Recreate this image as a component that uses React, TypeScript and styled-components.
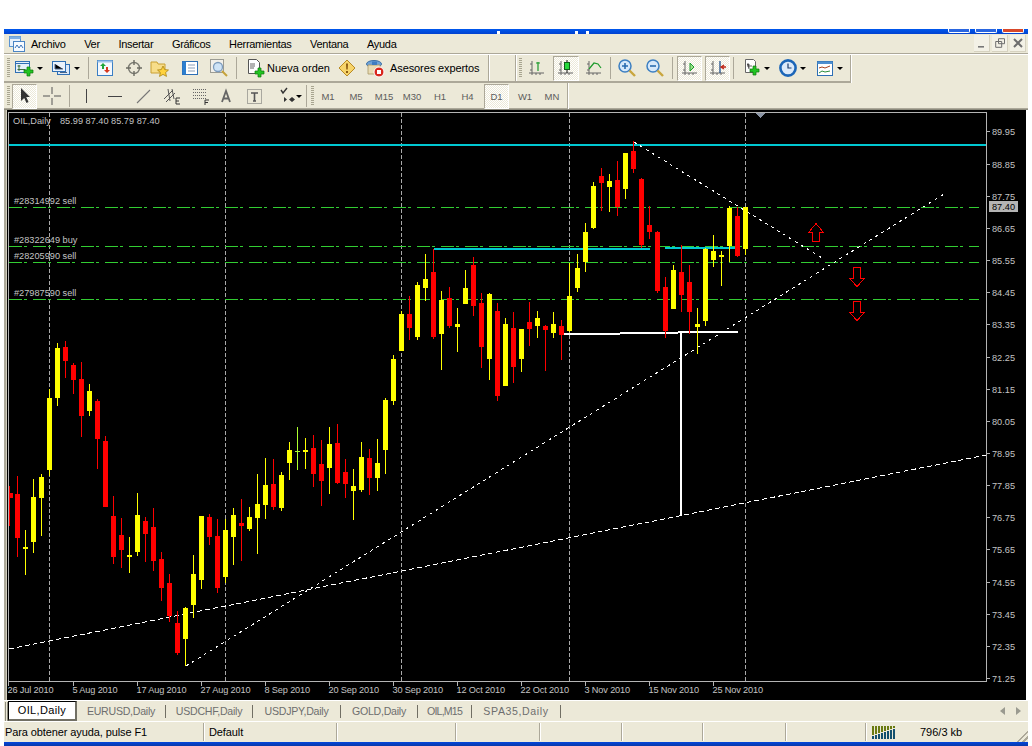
import React from "react";
import styled, { createGlobalStyle } from "styled-components";

const Global = createGlobalStyle`
  html, body { margin: 0; padding: 0; background: #fff; overflow: hidden; }
  #root { height: 746px; }
  * { box-sizing: border-box; }
`;

const Page = styled.div`
  width: 1032px; height: 746px; padding: 29px 4px 0 4px; background: #fff;
  font-family: "Liberation Sans", Arial, sans-serif; font-size: 11px; color: #000;
`;
const Win = styled.div`display: flex; flex-direction: column; height: 717px; background: #ece9d8;`;
const TitleStrip = styled.div`
  position: relative; height: 5px; flex: none;
  background: linear-gradient(#0058ee, #0242cf);
  display: flex; justify-content: flex-end; gap: 5px; padding-right: 4px;
`;
const TitleStub = styled.span<{ $red?: boolean }>`
  width: 22px; height: 4px; border: 1px solid #fff; border-top: 0; border-radius: 0 0 2px 2px;
  background: ${p => (p.$red ? "#d8482a" : "#2a66e0")};
`;
const TitleSpeck = styled.i<{ $x: number }>`
  position: absolute; left: ${p => p.$x}px; top: 2px; width: 3px; height: 3px; background: #fff;
`;
const MenuBar = styled.div`
  height: 21px; flex: none; display: flex; align-items: center; padding-left: 5px;
  border-bottom: 1px solid #fff; box-shadow: inset 0 -1px 0 #aca899;
`;
const MenuList = styled.div`display: flex; gap: 18.6px; margin-left: 6px; flex: 1;`;
const MenuItem = styled.span`font-size: 11px; letter-spacing: -0.3px;`;
const WinBtns = styled.div`display: flex; gap: 2px; padding-right: 2px; padding-bottom: 1px;`;
const WinBtn = styled.span`
  width: 16px; height: 17px; display: flex; align-items: center; justify-content: center;
  background: #f3f1e6; border-right: 1px solid #d6d2c0; border-bottom: 1px solid #d6d2c0;
`;
const Row = styled.div<{ $h: number }>`
  flex: none; display: flex; align-items: stretch; height: ${p => p.$h}px;
`;
const Row2 = styled(Row)`border-bottom: 1px solid #8d8b7d; box-shadow: inset 0 -1px 0 #aca899;`;
const Seg = styled.div<{ $w: number; $under?: boolean }>`
  width: ${p => p.$w}px; flex: none; display: flex; align-items: center;
  border-right: 1px solid #aca899; box-shadow: 1px 0 0 #fff;
  ${p => (p.$under ? "border-bottom: 2px solid #aca899;" : "")}
`;
const Grip = styled.span<{ $ml?: number; $mr?: number }>`
  width: 3px; height: 20px; flex: none; margin: 0 ${p => p.$mr ?? 2}px 0 ${p => p.$ml ?? 3}px;
  background: repeating-linear-gradient(#a8a590 0 1px, transparent 1px 2px);
`;
const Sep = styled.span<{ $ml?: number }>`
  width: 1px; height: 22px; flex: none; background: #aca899; margin: 0 2px 0 ${p => p.$ml ?? 2}px;
`;
const Tool = styled.span<{ $w: number; $pl?: number; $sel?: boolean; $ml?: number; $gap?: number }>`
  flex: none; width: ${p => p.$w}px; height: 25px; display: flex; align-items: center;
  margin-left: ${p => p.$ml ?? 0}px;
  gap: ${p => p.$gap ?? 2}px;
  ${p => (p.$pl !== undefined ? `padding-left: ${p.$pl}px;` : "justify-content: center;")}
  ${p =>
    p.$sel
      ? `border: 1px solid; border-color: #aca899 #fff #fff #aca899;
         background: repeating-conic-gradient(#fff 0 25%, #ece9d8 0 50%) 0 0 / 2px 2px;`
      : ""}
`;
const Caret = styled.i`
  width: 0; height: 0; flex: none; border: 3px solid transparent; border-top: 3px solid #000; border-bottom: 0;
`;
const ToolText = styled.span<{ $ls?: number }>`font-size: 11px; white-space: nowrap; letter-spacing: ${p => p.$ls ?? 0}px;`;
const Period = styled.span`font-size: 9.5px; color: #5c5c5c;`;
const ChartWrap = styled.div`
  flex: none; height: 590px; display: flex; background: #fff;
`;
const ChartEdge = styled.div`
  width: 4px; flex: none;
  background: linear-gradient(90deg, #aca899 0 2px, #d4d0bf 2px 3px, #000 3px);
`;
const ChartSvg = styled.svg`display: block; flex: none; background: #000;`;
const AxisText = styled.text<{ $ls?: number; $dark?: boolean }>`
  font-family: "Liberation Sans", Arial, sans-serif; font-size: 9.2px;
  fill: ${p => (p.$dark ? "#000" : "#c4c4c4")};
  letter-spacing: ${p => p.$ls ?? 0}px;
`;
const TabBar = styled.div`
  flex: none; height: 22px; display: flex; align-items: center; padding-left: 4px;
  border-top: 1px solid #fff; border-bottom: 1px solid #fff;
`;
const TabHandle = styled.span`
  width: 3px; height: 19px; border-left: 1px solid #8d8b7d; border-right: 1px solid #8d8b7d; margin-left: -3px;
`;
const ActiveTab = styled.span`
  width: 69px; height: 20px; margin-top: -1px; background: #fff; display: flex; align-items: center; justify-content: center;
  border: 1px solid #000; border-right: 2px solid #716f64; border-bottom: 2px solid #716f64;
  font-size: 11px; letter-spacing: .35px;
`;
const TabItem = styled.span<{ $w: number; $ls?: number }>`
  width: ${p => p.$w}px; height: 13px; display: flex; align-items: center; justify-content: center; flex: none;
  border-right: 1px solid #716f64; color: #6e6e6e; font-size: 10.6px; letter-spacing: ${p => p.$ls ?? -0.25}px;
`;
const TabArrows = styled.div`margin-left: auto; display: flex; gap: 10px; padding-right: 6px;`;
const StatusBar = styled.div`
  flex: none; height: 20px; display: flex; align-items: stretch; position: relative;
`;
const Cell = styled.span<{ $w: number; $pl?: number }>`
  flex: none; width: ${p => p.$w}px; border-right: 1px solid #aca899; box-shadow: 1px 0 0 #fff;
  padding-left: ${p => p.$pl ?? 0}px; display: flex; align-items: center; font-size: 11px; white-space: nowrap; margin: 1px 0;
  letter-spacing: -0.1px;
`;
const Traffic = styled.span`flex: 1; display: flex; align-items: center; padding-left: 6px; gap: 24px; font-size: 11px;`;
const ResizeGrip = styled.span`
  position: absolute; right: 0; bottom: 0; width: 13px; height: 13px;
  background: repeating-linear-gradient(135deg, transparent 0 2px, #aca899 2px 4px);
  clip-path: polygon(100% 0, 100% 100%, 0 100%);
`;
const BottomStrip = styled.div`flex: none; height: 4px; background: linear-gradient(#0346dc, #0838a8);`;

type Candle = [string, number, number, number, number];
// colour (y=yellow r=red g=lime), wick top, body top, body bottom, wick bottom
const C: Candle[] = [
  ["r",486,493,498,526],["r",476,494,538,557],["y",530,547,549,575],["y",479,497,542,553],["y",474,477,498,536],
  ["y",389,398,470,476],["y",343,348,398,406],["r",341,347,361,378],["r",363,365,380,394],["r",362,379,416,437],
  ["y",384,391,411,416],["r",399,401,439,469],["r",436,441,507,507],["r",496,516,557,564],["r",518,535,550,568],
  ["y",537,555,557,573],["y",493,515,552,556],["r",517,521,534,562],["r",508,527,561,571],["r",552,559,588,601],
  ["r",574,583,616,622],["r",611,623,653,655],["y",607,608,639,666],["y",555,574,605,618],["y",516,516,580,589],
  ["r",514,517,537,545],["r",519,536,588,593],["y",519,530,577,583],["y",508,515,537,565],["r",499,523,526,561],
  ["y",507,517,529,531],["y",474,504,518,554],["y",458,485,505,519],["r",459,484,507,510],["y",472,475,508,511],
  ["y",442,450,463,480],["g",427,451,452,470],["y",438,450,452,469],["r",435,448,474,487],["r",440,464,481,506],
  ["y",427,444,468,494],["r",424,443,483,484],["r",459,472,484,498],["y",469,486,491,520],["y",442,457,490,492],
  ["r",449,458,478,495],["y",439,463,478,491],["y",398,400,450,474],["y",355,359,401,405],["y",311,314,351,351],
  ["r",296,314,328,340],["y",282,285,337,340],["y",254,279,288,301],["r",249,272,337,339],["y",291,300,334,370],
  ["r",287,298,326,328],["y",308,324,327,352],["y",270,288,304,304],["r",257,265,306,316],["r",293,303,347,368],
  ["y",293,294,359,380],["r",303,311,396,401],["y",318,324,386,386],["r",312,328,367,383],["y",329,329,359,372],
  ["r",302,322,329,346],["y",311,318,326,338],["r",325,326,330,371],["y",312,324,333,338],["r",320,326,335,360],
  ["y",263,296,331,332],["y",254,268,288,292],["y",223,232,262,272],["y",182,186,228,229],["r",168,176,183,211],
  ["y",174,181,187,212],["r",161,180,207,216],["y",153,153,189,199],["r",141,151,169,173],["r",178,179,245,248],
  ["r",206,225,232,239],["r",231,232,291,293],["r",277,287,331,338],["y",265,270,309,309],["r",245,272,295,312],
  ["r",265,282,312,334],["y",308,324,327,354],["y",248,249,321,326],["y",235,251,260,267],["y",251,255,257,286],
  ["y",206,208,246,262],["r",207,216,256,257],["y",207,207,249,255],
];
const COL: Record<string, string> = { y: "#ffff00", r: "#ff0000", g: "#adff2f" };
const PRICES: [string, number][] = [
  ["89.95",131],["88.85",164],["87.75",196],["86.65",228],["85.55",260],["84.45",292],["83.35",324],["82.25",357],
  ["81.15",389],["80.05",421],["78.95",453],["77.85",485],["76.75",517],["75.65",549],["74.55",582],["73.45",614],
  ["72.35",646],["71.25",678],
];
const DATES: [string, number][] = [
  ["26 Jul 2010",8],["5 Aug 2010",73],["17 Aug 2010",137],["27 Aug 2010",201],["8 Sep 2010",265],["20 Sep 2010",329],
  ["30 Sep 2010",393],["12 Oct 2010",457],["22 Oct 2010",521],["3 Nov 2010",585],["15 Nov 2010",649],["25 Nov 2010",713],
];
const ORDERS: [string, number, number][] = [
  ["#28314992 sell",207,204],["#28322649 buy",246,243],["#28205990 sell",262,259],["#27987590 sell",299,296],
];

const Chart = () => (
  <ChartSvg width={1018} height={590} viewBox="8 110 1018 590">
    <g shapeRendering="crispEdges">
      <path d="M8.5 112.5H986.5V681.5H8.5Z" fill="none" stroke="#b4b4b4" />
      {[49, 225, 401, 569, 745].map(x => (
        <line key={x} x1={x + 0.5} x2={x + 0.5} y1={113} y2={681} stroke="#a8a8a8" strokeDasharray="4 2" />
      ))}
      <rect x="9" y="144" width="977" height="2" fill="#00c8d2" />
      <rect x="434" y="248" width="216" height="2" fill="#00c8d2" />
      <rect x="665" y="247" width="70" height="2" fill="#00c8d2" />
      {ORDERS.map(([, y]) => (
        <line key={y} x1={9} x2={979} y1={y + 0.5} y2={y + 0.5} stroke="#32cd32" strokeDasharray="13 2 3 6" />
      ))}
      <line x1={634} y1={142} x2={822} y2={258} stroke="#fff" strokeDasharray="3 4" />
      <line x1={186} y1={666} x2={944} y2={194} stroke="#fff" strokeDasharray="3 4" />
      <line x1={9} y1={649} x2={986} y2={455} stroke="#fff" strokeDasharray="5 3" />
      <rect x="564" y="333" width="56" height="2" fill="#fff" />
      <rect x="620" y="332" width="58" height="2" fill="#fff" />
      <rect x="678" y="331" width="60" height="2" fill="#fff" />
      <rect x="680" y="332" width="2" height="184" fill="#fff" />
      {C.map(([k, wt, bt, bb, wb], n) => {
        const c = 9 + 8 * n;
        return (
          <g key={n} fill={COL[k]}>
            <rect x={c} y={wt} width={1} height={wb - wt} />
            <rect x={Math.max(9, c - 2)} y={bt} width={n === 0 ? 4 : 5} height={Math.max(bb - bt, 1)} />
          </g>
        );
      })}
      {PRICES.map(([, y]) => <rect key={y} x="986" y={y} width="4" height="1" fill="#b4b4b4" />)}
      {DATES.map(([, x]) => <rect key={x} x={x} y="681" width="1" height="5" fill="#b4b4b4" />)}
      <path d="M755 113h10l-5 5z" fill="#8a94a4" />
      <g fill="none" stroke="#f00">
        <path d="M812.5 241.5V232.5H808.5L816 223.5L823.5 232.5H819.5V241.5Z" />
        <path d="M853.5 267.5V278.5H849.5L857 286.5L864.5 278.5H860.5V267.5Z" />
        <path d="M853.5 301.5V312.5H849.5L857 320.5L864.5 312.5H860.5V301.5Z" />
      </g>
    </g>
    <AxisText x={13} y={124}>OIL,Daily</AxisText>
    <AxisText x={60} y={124}>85.99 87.40 85.79 87.40</AxisText>
    {ORDERS.map(([t, , y]) => <AxisText key={t} x={14} y={y}>{t}</AxisText>)}
    {PRICES.map(([t, y]) => <AxisText key={t} x={992} y={y + 3.5}>{t}</AxisText>)}
    <rect x="989" y="201" width="29" height="11" fill="#b4b4b4" shapeRendering="crispEdges" />
    <AxisText x={992} y={210} $dark>87.40</AxisText>
    {DATES.map(([t, x]) => <AxisText key={t} x={x - 0.5} y={693} $ls={-0.15}>{t}</AxisText>)}
  </ChartSvg>
);

const Ico = ({ children, s = 20 }: { children: React.ReactNode; s?: number }) => (
  <svg width={s} height={s} viewBox="0 0 20 20" style={{ flex: "none", display: "block" }}>{children}</svg>
);
const Plus = ({ x, y }: { x: number; y: number }) => (
  <path transform={`translate(${x} ${y})`} d="M3 0h3v3h3v3H6v3H3V6H0V3h3z" fill="#22c422" stroke="#0b7a0b" strokeWidth=".7" />
);
const Axes = ({ c = "#666" }: { c?: string }) => (
  <path d="M5 3v14M2 15h15M3 6h2M3 12h2M9 15v2M13 15v2" stroke={c} strokeWidth="1" fill="none" />
);
const IconNew = () => (
  <Ico><rect x="1.5" y="3.5" width="14" height="11" fill="#e4effa" stroke="#2f6fb4" /><path d="M1.5 5.5h14" stroke="#2f6fb4" /><path d="M5 7v6M3.5 11.5h8M3.5 8h3" stroke="#3b6e3b" /><Plus x={10} y={9} /></Ico>
);
const IconProfile = () => (
  <Ico><rect x="6.5" y="6.5" width="12" height="10" fill="#dbe8f7" stroke="#2f6fb4" /><rect x="1.5" y="3.5" width="13" height="10" fill="#eaf2fb" stroke="#2f6fb4" /><path d="M4 6v5h8M9 14.5h7" stroke="#48658a" /></Ico>
);
const IconMarket = () => (
  <Ico><rect x="2.5" y="2.5" width="15" height="15" fill="#f4f8fd" stroke="#3a7fc4" /><path d="M2.5 2.5h15v2h-15z" fill="#9cc3ea" /><path d="M8 5l3 3H9v3H7V8H5z" fill="#1fa53a" /><path d="M12 15l-3-3h2V9h2v3h2z" fill="#d7381e" /></Ico>
);
const IconCross = () => (
  <Ico><circle cx="10" cy="10" r="5.5" fill="none" stroke="#7b7b72" strokeWidth="1.4" /><path d="M10 2v5M10 13v5M2 10h5M13 10h5" stroke="#6b6b62" strokeWidth="1.4" /></Ico>
);
const IconFolder = () => (
  <Ico><path d="M1 4h6l1 2h7v9H1z" fill="#f7dd8a" stroke="#c9a032" /><path d="M13 8l1.7 3.6 3.8.4-2.9 2.6.9 3.8-3.5-2-3.5 2 .9-3.8L7.5 12l3.8-.4z" fill="#ffd23c" stroke="#a98414" strokeWidth=".8" /></Ico>
);
const IconNav = () => (
  <Ico><rect x="2.5" y="3.5" width="15" height="13" fill="#fff" stroke="#2d6fb5" /><rect x="2.5" y="3.5" width="3.5" height="13" fill="#2d7fcf" /><path d="M8 7h7M8 10h7M8 13h7" stroke="#8a9fb8" /></Ico>
);
const IconSearch = () => (
  <Ico><rect x="1.5" y="1.5" width="13" height="13" fill="#f2f0ea" stroke="#9c9c94" /><circle cx="9" cy="9" r="4.5" fill="#cfe4f7" stroke="#7d9cbd" strokeWidth="1.3" /><path d="M13 13l5 5" stroke="#c6a23a" strokeWidth="2" /></Ico>
);
const IconOrder = () => (
  <Ico><path d="M3.5 1.5h8l3 3v11h-11z" fill="#fff" stroke="#555" /><path d="M5 6h5M5 8h5M5 10h4" stroke="#666" /><Plus x={10} y={10} /></Ico>
);
const IconWarn = () => (
  <Ico><path d="M10 2l8 8-8 8-8-8z" fill="#f7d46a" stroke="#b88a24" /><path d="M9 5.5h2l-.3 6h-1.4zM9 13h2v2H9z" fill="#8a5a10" /></Ico>
);
const IconExpert = () => (
  <Ico><ellipse cx="9" cy="6" rx="7.5" ry="3.5" fill="#6ea3d8" stroke="#3a6ea5" /><path d="M3 7h12v9H3z" fill="#e9dcb4" stroke="#a89868" strokeWidth=".8" /><path d="M7 3.5h5V7H7z" fill="#3f7cc0" /><circle cx="14" cy="14" r="5" fill="#d8261c" stroke="#fff" /><rect x="12" y="12" width="4" height="4" fill="#fff" /></Ico>
);
const IconBars = () => (
  <Ico><Axes /><path d="M11 4v9M11 5H9M11 5h2" stroke="#1b9a2a" strokeWidth="1.2" fill="none" /></Ico>
);
const IconCandle = () => (
  <Ico><Axes /><path d="M11 2v13" stroke="#111" /><rect x="8.5" y="4.5" width="5" height="7" fill="#27d83c" stroke="#0d5e18" /></Ico>
);
const IconLine = () => (
  <Ico><Axes /><path d="M5 11l5-6 4 1 3 4" stroke="#1b9a2a" strokeWidth="1.2" fill="none" /></Ico>
);
const IconZoom = ({ minus }: { minus?: boolean }) => (
  <Ico><circle cx="8" cy="8" r="6" fill="#d7e9fa" stroke="#3c7fc2" strokeWidth="1.5" /><path d={minus ? "M5 8h6" : "M5 8h6M8 5v6"} stroke="#2a6cb0" strokeWidth="1.6" /><path d="M12.5 12.5l5.5 5.5" stroke="#c9a63e" strokeWidth="2.4" /></Ico>
);
const IconShift = () => (
  <Ico><Axes /><path d="M10 5v8l4-4z" fill="#9be08a" stroke="#1b9a2a" /></Ico>
);
const IconAuto = () => (
  <Ico><Axes /><path d="M12 3v12" stroke="#1f4f8a" strokeWidth="1.3" /><path d="M18 9h-4M16 7l-3 2 3 2" stroke="#c0281a" strokeWidth="1.3" fill="none" /></Ico>
);
const IconIndicator = () => (
  <Ico><path d="M3.5 1.5h8l2 2v11h-10z" fill="#fff" stroke="#666" /><path d="M5 6h2v5M5 8h5" stroke="#666" /><Plus x={8} y={8} /></Ico>
);
const IconClock = () => (
  <Ico><circle cx="10" cy="10" r="7.6" fill="#dceafa" stroke="#1c66b8" strokeWidth="2.6" /><path d="M10 5.5v4.5h3.5" stroke="#1b3a6b" strokeWidth="1.2" fill="none" /></Ico>
);
const IconTemplate = () => (
  <Ico><rect x="2.5" y="3.5" width="15" height="14" fill="#fff" stroke="#2d6fb5" /><rect x="2.5" y="3.5" width="15" height="2.5" fill="#4d8fd0" /><path d="M4 10l3-1 3 1 5-2" stroke="#a8421e" fill="none" /><path d="M4 15l3-2 3 1 5-1" stroke="#2a8c3a" fill="none" /></Ico>
);
const IconCursor = () => (
  <Ico><path d="M6 2v13l3.2-3 2.3 5 2-1-2.2-5H15z" fill="#333" /></Ico>
);
const IconCrossHair = () => (
  <Ico><path d="M10 1v7M10 12v7M1 10h7M12 10h7" stroke="#555" /></Ico>
);
const IconV = () => <Ico><path d="M10.5 3v14" stroke="#444" /></Ico>;
const IconH = () => <Ico><path d="M3 10.5h14" stroke="#444" /></Ico>;
const IconT = () => <Ico><path d="M4 17L17 4" stroke="#777" strokeWidth="1.1" /></Ico>;
const IconE = () => (
  <Ico><path d="M2 13L11 4M4 16L13 7M6 3l2 12M10 3l2 10" stroke="#555" fill="none" /><path d="M14 12h4M14 12v6h4M14 15h3" stroke="#333" fill="none" /></Ico>
);
const IconF = () => (
  <Ico><path d="M2 3.5h13M2 6.5h13M2 9.5h13M2 12.5h13" stroke="#666" strokeDasharray="1 1" /><path d="M14 14v5M14 14h4M14 16.5h3" stroke="#333" fill="none" /></Ico>
);
const IconA = () => <Ico><path d="M6 16l4-11 4 11M7.5 12.5h5" stroke="#666" strokeWidth="1.8" fill="none" /></Ico>;
const IconTB = () => (
  <Ico><rect x="2.5" y="3.5" width="14" height="14" fill="none" stroke="#666" strokeDasharray="1 1" /><path d="M6 7h7M9.5 7v8M8 15h3" stroke="#555" strokeWidth="1.6" /></Ico>
);
const IconArrows = () => (
  <Ico><path d="M5 4l2 3 4-5" stroke="#333" strokeWidth="1.4" fill="none" /><path d="M8 11l3 2.5-3 2.5zM13 13.5l3-2.5 3 2.5-3 2.5z" fill="#333" /></Ico>
);
const IconApp = () => (
  <svg width="16" height="16" viewBox="0 0 16 16" style={{ display: "block" }}>
    <rect x=".5" y=".5" width="11" height="10" fill="#e8f1fb" stroke="#5a94d2" /><rect x=".5" y=".5" width="11" height="2.5" fill="#80b0e4" />
    <rect x="4.5" y="5.5" width="11" height="10" fill="#f6faff" stroke="#4a84c4" /><path d="M6 12l2-3 2 3 2-3 2 3" stroke="#3b74b8" fill="none" />
  </svg>
);
const Signal = () => (
  <svg width="24" height="13" viewBox="0 0 24 13" style={{ display: "block", flex: "none" }} shapeRendering="crispEdges">
    {[0,1,2,3,4,5,6,7].map(i => (
      <g key={i}>
        <rect x={i * 3} y={0} width="2" height={9 - i} fill="#6a7a10" />
        <rect x={i * 3} y={10 - i} width="2" height={3 + i} fill="#13506e" />
      </g>
    ))}
  </svg>
);

export default function App() {
  return (
    <Page>
      <Global />
      <Win>
        <TitleStrip>
          <TitleSpeck $x={493} /><TitleSpeck $x={571} /><TitleSpeck $x={582} />
          <TitleStub /><TitleStub /><TitleStub $red />
        </TitleStrip>
        <MenuBar>
          <IconApp />
          <MenuList>
            {["Archivo", "Ver", "Insertar", "Gráficos", "Herramientas", "Ventana", "Ayuda"].map(m => (
              <MenuItem key={m}>{m}</MenuItem>
            ))}
          </MenuList>
          <WinBtns>
            <WinBtn><svg width="9" height="9" viewBox="0 0 9 9"><path d="M1 7h6v1.6H1z" fill="#777" /></svg></WinBtn>
            <WinBtn><svg width="10" height="10" viewBox="0 0 10 10"><path d="M3.5 .7h6v5h-6zM.7 3.5h6v5.8h-6z" fill="#f3f1e6" stroke="#6e6e6e" /></svg></WinBtn>
            <WinBtn><svg width="10" height="10" viewBox="0 0 10 10"><path d="M1 1l8 8M9 1L1 9" stroke="#6e6e6e" strokeWidth="2" /></svg></WinBtn>
          </WinBtns>
        </MenuBar>
        <Row $h={28}>
          <Seg $w={485} $under>
            <Grip />
            <Tool $w={34} $pl={2} $gap={3}><IconNew /><Caret /></Tool>
            <Tool $w={40} $pl={5} $gap={3}><IconProfile /><Caret /></Tool>
            <Sep />
            <Tool $w={28}><IconMarket /></Tool>
            <Tool $w={30}><IconCross /></Tool>
            <Tool $w={22}><IconFolder /></Tool>
            <Tool $w={38}><IconNav /></Tool>
            <Tool $w={20}><IconSearch /></Tool>
            <Sep $ml={7} />
            <Tool $w={91} $pl={6}><IconOrder /><ToolText>Nueva orden</ToolText></Tool>
            <Tool $w={34}><IconWarn /></Tool>
            <Tool $w={115} $pl={1} $gap={5}><IconExpert /><ToolText $ls={-0.1}>Asesores expertos</ToolText></Tool>
          </Seg>
          <Seg $w={27} $under />
          <Seg $w={335} $under>
            <Grip />
            <Tool $w={26}><IconBars /></Tool>
            <Tool $w={26} $ml={3} $sel><IconCandle /></Tool>
            <Tool $w={29}><IconLine /></Tool>
            <Sep />
            <Tool $w={28}><IconZoom /></Tool>
            <Tool $w={28}><IconZoom minus /></Tool>
            <Sep $ml={3} />
            <Tool $w={25} $ml={2} $sel><IconShift /></Tool>
            <Tool $w={25} $ml={3} $sel><IconAuto /></Tool>
            <Sep $ml={3} />
            <Tool $w={34} $pl={6}><IconIndicator /><Caret /></Tool>
            <Tool $w={37} $pl={8}><IconClock /><Caret /></Tool>
            <Tool $w={37} $pl={8}><IconTemplate /><Caret /></Tool>
          </Seg>
        </Row>
        <Row2 $h={27}>
          <Seg $w={564}>
            <Grip />
            <Tool $w={25} $sel><IconCursor /></Tool>
            <Tool $w={30}><IconCrossHair /></Tool>
            <Sep />
            <Tool $w={28}><IconV /></Tool>
            <Tool $w={30}><IconH /></Tool>
            <Tool $w={26}><IconT /></Tool>
            <Tool $w={32}><IconE /></Tool>
            <Tool $w={26}><IconF /></Tool>
            <Tool $w={24}><IconA /></Tool>
            <Tool $w={34}><IconTB /></Tool>
            <Tool $w={32} $pl={4} $gap={0}><IconArrows /><Caret /></Tool>
            <Sep />
            <Grip $ml={2} $mr={0} />
            {["M1", "M5", "M15", "M30", "H1"].map(p => (
              <Tool key={p} $w={28}><Period>{p}</Period></Tool>
            ))}
            <Tool $w={27}><Period>H4</Period></Tool>
            <Tool $w={25} $ml={3} $sel><Period>D1</Period></Tool>
            <Tool $w={32}><Period>W1</Period></Tool>
            <Tool $w={22}><Period>MN</Period></Tool>
          </Seg>
        </Row2>
        <ChartWrap>
          <ChartEdge />
          <Chart />
        </ChartWrap>
        <TabBar>
          <TabHandle />
          <ActiveTab>OIL,Daily</ActiveTab>
          <TabItem $w={89}>EURUSD,Daily</TabItem>
          <TabItem $w={87}>USDCHF,Daily</TabItem>
          <TabItem $w={88}>USDJPY,Daily</TabItem>
          <TabItem $w={77}>GOLD,Daily</TabItem>
          <TabItem $w={54} $ls={-0.8}>OIL,M15</TabItem>
          <TabItem $w={89} $ls={0.6}>SPA35,Daily</TabItem>
          <TabArrows>
            <svg width="6" height="8" viewBox="0 0 6 8"><path d="M5 0v8L0 4z" fill="#9a9a90" /></svg>
            <svg width="6" height="8" viewBox="0 0 6 8"><path d="M0 0v8l5-4z" fill="#9a9a90" /></svg>
          </TabArrows>
        </TabBar>
        <StatusBar>
          <Cell $w={200} $pl={1}>Para obtener ayuda, pulse F1</Cell>
          <Cell $w={133} $pl={5}>Default</Cell>
          <Cell $w={119} />
          <Cell $w={84} />
          <Cell $w={82} />
          <Cell $w={81} />
          <Cell $w={83} />
          <Cell $w={80} />
          <Traffic><Signal /><span>796/3 kb</span></Traffic>
          <ResizeGrip />
        </StatusBar>
        <BottomStrip />
      </Win>
    </Page>
  );
}
